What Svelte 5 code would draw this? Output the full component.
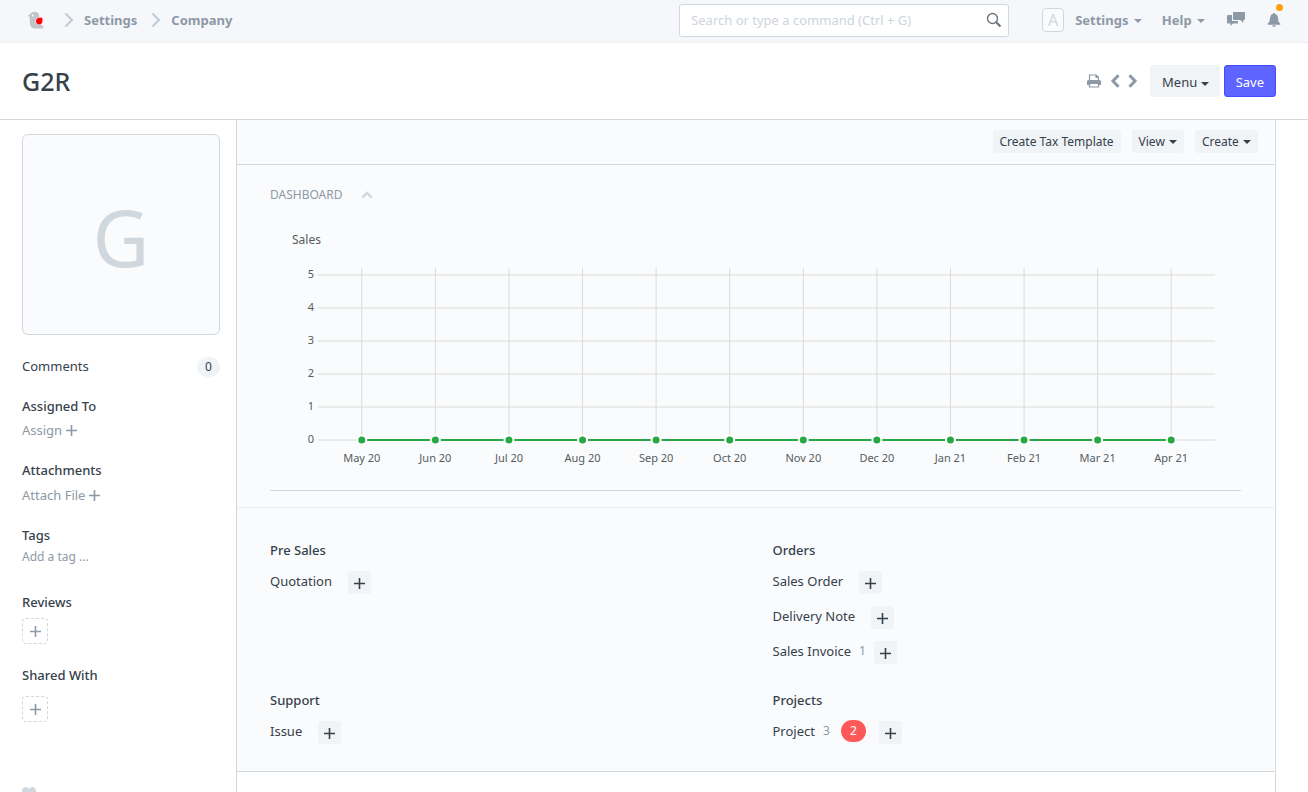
<script>
  const months = ['May 20', 'Jun 20', 'Jul 20', 'Aug 20', 'Sep 20', 'Oct 20', 'Nov 20', 'Dec 20', 'Jan 21', 'Feb 21', 'Mar 21', 'Apr 21'];
  const ticks = [5, 4, 3, 2, 1, 0];
  const groups = [
    { title: 'Pre Sales', links: [{ name: 'Quotation' }] },
    { title: 'Orders', links: [{ name: 'Sales Order' }, { name: 'Delivery Note' }, { name: 'Sales Invoice', count: 1 }] },
    { title: 'Support', links: [{ name: 'Issue' }] },
    { title: 'Projects', links: [{ name: 'Project', count: 3, open: 2 }] }
  ];

  let chartWidth = $state(971);
  const step = $derived((chartWidth - 88) / months.length);
  const xs = $derived(months.map((_, i) => 55 + step * (i + 0.5)));
</script>

{#snippet plus(size)}
  <svg class="icon" width={size} height={size} viewBox="0 0 11 11" aria-hidden="true">
    <path d="M5.500 0v11M0 5.500h11" stroke="currentColor" stroke-width="1.600" />
  </svg>
{/snippet}

<div class="page">
  <nav class="navbar">
    <a class="brand" href="#home" aria-label="Home">
      <svg width="18" height="18" viewBox="0 0 18 18">
        <path d="M.8 4.600 3 3.600C3.600 1.700 5.300.8 7.300.8c3 0 5 1.900 5 4.500 0 .5 0 .9-.2 1.300h-.6C9.500 7.300 8.500 8.600 8.500 10.200c0 2.100 1.500 3.600 3.500 3.600.8 0 1.400-.1 2-.4.800.7 1.400 1.200 2.300 1.700v2.500H8.600C5 17.600 2.800 15 2.800 11.700V6.200z" fill="#c2c5c7" />
        <circle cx="5.800" cy="4.500" r=".9" fill="#fff" />
        <path d="M9 10.200c0-2 1.400-3.400 3.400-3.400h3v3.500c0 1.900-1.200 3.200-3.200 3.200-1.900 0-3.200-1.400-3.200-3.300z" fill="#f00" />
      </svg>
    </a>
    <svg class="crumb" width="10" height="16" viewBox="0 0 10 16" aria-hidden="true"><path d="M1.500 1.500 8 8l-6.500 6.500" fill="none" stroke="#c0cad4" stroke-width="2" /></svg>
    <a class="nav-link" href="#settings">Settings</a>
    <svg class="crumb" width="10" height="16" viewBox="0 0 10 16" aria-hidden="true"><path d="M1.500 1.500 8 8l-6.500 6.500" fill="none" stroke="#c0cad4" stroke-width="2" /></svg>
    <a class="nav-link" href="#company">Company</a>
    <div class="search">
      <input type="text" aria-label="Search" placeholder="Search or type a command (Ctrl + G)" />
      <svg width="16" height="16" viewBox="0 0 16 16" aria-hidden="true">
        <circle cx="6.500" cy="6.500" r="5" fill="none" stroke="#6c7680" stroke-width="1.400" />
        <path d="m10.200 10.200 4.300 4.300" stroke="#6c7680" stroke-width="2.200" />
      </svg>
    </div>
    <span class="user">A</span>
    <button class="nav-link menu-settings">Settings <i class="caret"></i></button>
    <button class="nav-link menu-help">Help <i class="caret"></i></button>
    <button class="chat" aria-label="Chat">
      <svg width="18" height="15" viewBox="0 0 18 15">
        <path d="M1 3h4v6h6v2.500H6L3.500 14v-2.500H1a1 1 0 0 1-1-1V4a1 1 0 0 1 1-1z" fill="#8d99a6" />
        <path d="M7 0h10a1 1 0 0 1 1 1v6a1 1 0 0 1-1 1h-.8v3l-3-3H7a1 1 0 0 1-1-1V1a1 1 0 0 1 1-1z" fill="#8d99a6" />
      </svg>
    </button>
    <button class="bell" aria-label="Notifications">
      <svg width="14" height="14" viewBox="0 0 14 14">
        <path d="M7 0c.7 0 1.100.4 1.200 1.100C10 1.600 10.800 3 11 5c.2 3 .7 4.400 2.300 5.600v1.200H.7v-1.200C2.300 9.400 2.800 8 3 5c.2-2 1-3.400 2.800-3.900C5.900.4 6.300 0 7 0zM5.200 12.300h3.600A1.800 1.500 0 0 1 5.200 12.300z" fill="#8d99a6" />
      </svg>
      <span class="dot"></span>
    </button>
  </nav>

  <header class="head">
    <h1>G2R</h1>
    <div class="actions">
      <button class="plain" aria-label="Print">
        <svg width="16" height="14" viewBox="0 0 16 14">
          <path d="M3.500 7V1h6.700l2.300 2.300V7M10 1v2.500h2.500" fill="none" stroke="#8d99a6" stroke-width="1.200" />
          <path d="M2.500 6h11A1.500 1.500 0 0 1 15 7.500V11h-2V9H3v2H1V7.500A1.500 1.500 0 0 1 2.500 6z" fill="#8d99a6" />
          <path d="M3.500 9.500h9v3.500h-9z" fill="#fff" stroke="#8d99a6" stroke-width="1.200" />
        </svg>
      </button>
      <button class="plain" aria-label="Previous">
        <svg width="10" height="14" viewBox="0 0 10 14"><path d="M8.500 1.300 3 7l5.500 5.700" fill="none" stroke="#8d99a6" stroke-width="3" /></svg>
      </button>
      <button class="plain" aria-label="Next">
        <svg width="10" height="14" viewBox="0 0 10 14"><path d="M1.500 1.300 7 7l-5.500 5.700" fill="none" stroke="#8d99a6" stroke-width="3" /></svg>
      </button>
      <button class="btn menu">Menu <i class="caret"></i></button>
      <button class="btn primary">Save</button>
    </div>
  </header>

  <div class="body">
    <aside>
      <div class="avatar">G</div>
      <div class="comments"><a href="#comments">Comments</a><span class="badge">0</span></div>
      <section class="assigned">
        <h2>Assigned To</h2>
        <button class="add">Assign {@render plus(11)}</button>
      </section>
      <section class="attachments">
        <h2>Attachments</h2>
        <button class="add">Attach File {@render plus(11)}</button>
      </section>
      <section class="tags">
        <h2>Tags</h2>
        <input type="text" aria-label="Add a tag" placeholder="Add a tag ..." />
      </section>
      <section class="reviews">
        <h2>Reviews</h2>
        <button class="dashed" aria-label="Add review">{@render plus(11)}</button>
      </section>
      <section class="shared">
        <h2>Shared With</h2>
        <button class="dashed" aria-label="Share">{@render plus(11)}</button>
      </section>
      <button class="like" aria-label="Like">
        <svg width="14" height="13" viewBox="0 0 14 13"><path d="M7 13 1 6.800C-1.200 4 .5 0 3.600 0 5.300 0 6.400 1 7 2c.6-1 1.700-2 3.400-2 3.100 0 4.800 4 2.600 6.800z" fill="#d1d8dd" /></svg>
      </button>
    </aside>

    <main>
      <div class="toolbar">
        <button class="btn small">Create Tax Template</button>
        <button class="btn small">View <i class="caret"></i></button>
        <button class="btn small">Create <i class="caret"></i></button>
      </div>

      <section class="dashboard">
        <button class="section-title">DASHBOARD
          <svg width="12" height="8" viewBox="0 0 12 8" aria-hidden="true"><path d="m1.300 6.700 4.700-4.700 4.700 4.700" fill="none" stroke="#d1d8dd" stroke-width="2.400" /></svg>
        </button>
        <div class="chart" bind:clientWidth={chartWidth}>
          <svg width={chartWidth} height="270" role="img" aria-label="Sales">
            <text class="title" x="22" y="24">Sales</text>
            {#each ticks as t, i}
              <line x1="48" x2={chartWidth - 26} y1={55 + i * 33} y2={55 + i * 33} stroke="#dadada" />
              <text x="44" y={58 + i * 33} text-anchor="end">{t}</text>
            {/each}
            {#each xs as x, i}
              <line x1={x} x2={x} y1="48" y2="226" stroke="#dadada" />
              <text {x} y="242" text-anchor="middle">{months[i]}</text>
            {/each}
            <line x1={xs[0]} x2={xs[xs.length - 1]} y1="220" y2="220" stroke="#28a745" stroke-width="2" />
            {#each xs as x}
              <circle cx={x} cy="220" r="4.500" fill="#28a745" stroke="#fff" stroke-width="2" />
            {/each}
          </svg>
        </div>
      </section>

      <section class="links">
        {#each groups as g}
          <div class="group">
            <h2>{g.title}</h2>
            {#each g.links as l}
              <div class="link">
                <a href="#{l.name}">{l.name}</a>
                {#if l.count}<span class="count">{l.count}</span>{/if}
                {#if l.open}<span class="open">{l.open}</span>{/if}
                <button class="new" class:tight={l.count && !l.open} aria-label="New {l.name}">{@render plus(11)}</button>
              </div>
            {/each}
          </div>
        {/each}
      </section>
    </main>
  </div>
</div>

<style>
  :global(body) { margin: 0; background: #fff; }
  .page {
    height: 100vh;
    overflow: hidden;
    display: flex;
    flex-direction: column;
    font: 13px/18px "Noto Sans", "Open Sans", sans-serif;
    color: #36414c;
  }
  .page * { box-sizing: border-box; }
  button, input { font: inherit; color: inherit; background: none; border: 0; padding: 0; margin: 0; }
  button { cursor: pointer; }
  a { color: inherit; text-decoration: none; }
  svg { display: block; flex: none; }
  h1, h2 { margin: 0; }
  h2 { font-size: 13px; line-height: 18px; font-weight: 500; }
  .caret {
    display: inline-block;
    border: 4px solid transparent;
    border-top-color: currentColor;
    border-bottom: 0;
    vertical-align: middle;
  }

  .navbar {
    flex: none;
    display: flex;
    align-items: center;
    height: 43px;
    padding: 0 27px;
    padding-bottom: 2px;
    background: #f5f7fa;
    border-bottom: 1px solid #ebeff2;
    color: #8d99a6;
  }
  .brand { margin-right: 19px; }
  .crumb { margin-right: 10px; }
  .nav-link { font-weight: 700; white-space: nowrap; }
  .nav-link + .crumb { margin-left: 14px; }
  .search {
    display: flex;
    align-items: center;
    width: 330px;
    height: 33px;
    margin-left: auto;
    margin-right: 33px;
    padding: 0 6px 0 11px;
    background: #fff;
    border: 1px solid #d1d8dd;
    border-radius: 3px;
  }
  .search input { flex: 1; min-width: 0; outline: 0; }
  input::placeholder { color: #ced5db; opacity: 1; }
  .user {
    width: 22px;
    height: 24px;
    border: 1px solid #d1d8dd;
    border-radius: 4px;
    background: #fafbfc;
    color: #d1d8dd;
    text-align: center;
    font-size: 16px;
    line-height: 22px;
    margin-right: 11px;
  }
  .nav-link .caret { margin-left: 2px; }
  .menu-settings { margin-right: 20px; }
  .menu-help { margin-right: 22px; }
  .chat { margin-right: 22px; margin-bottom: 2px; }
  .bell { position: relative; }
  .dot { position: absolute; top: -9px; right: -2px; width: 7px; height: 7px; border-radius: 50%; background: #ffa00a; }

  .head {
    flex: none;
    display: flex;
    align-items: center;
    justify-content: space-between;
    height: 77px;
    padding: 0 32px 0 22px;
    border-bottom: 1px solid #d1d8dd;
  }
  h1 { font-size: 25px; line-height: 32px; font-weight: 500; }
  .actions { display: flex; align-items: center; }
  .plain { margin-right: 8px; }
  .btn { background: #f0f4f7; border-radius: 4px; white-space: nowrap; }
  .menu { height: 32px; padding: 2px 11px 0 12px; margin-left: 4px; margin-right: 4px; }
  .primary { height: 32px; padding: 2px 11px 0; background: #5e64ff; border: 1px solid #444bff; border-radius: 3px; color: #fff; }

  .body { flex: 1; display: flex; min-height: 0; padding-right: 32px; }
  aside { flex: none; width: 236px; padding: 14px 16px 0 22px; }
  .avatar {
    height: 201px;
    border: 1px solid #d1d8dd;
    border-radius: 6px;
    background: #fafbfc;
    color: #d1d8dd;
    font-size: 78px;
    line-height: 204px;
    text-align: center;
  }
  .comments { display: flex; justify-content: space-between; align-items: flex-start; margin-top: 22px; }
  .badge { width: 23px; height: 20px; border-radius: 10px; background: #f0f4f7; text-align: center; line-height: 20px; font-size: 12px; }
  aside section { margin-top: 20px; }
  .assigned { height: 44px; }
  .attachments { height: 45px; }
  .add { display: flex; align-items: center; gap: 4px; margin-top: 6px; color: #8d99a6; }
  .attachments .add { margin-top: 7px; }
  .tags { height: 47px; }
  .tags input { display: block; width: 100%; font-size: 12px; margin-top: 4px; }
  .tags input::placeholder { color: #8d99a6; }
  .dashed {
    display: grid;
    place-items: center;
    width: 26px;
    height: 26px;
    margin-top: 7px;
    border: 1px dashed #d1d8dd;
    border-radius: 4px;
    color: #8d99a6;
  }
  .shared .dashed { margin-top: 12px; }
  aside .shared { margin-top: 22px; }
  .like { margin-top: 65px; }

  main { flex: 1; min-width: 0; border: solid #d1d8dd; border-width: 0 1px; padding-right: 1px; }
  .toolbar {
    display: flex;
    justify-content: flex-end;
    gap: 11px;
    height: 45px;
    padding: 10px 16px 0 0;
    background: #fafbfc;
    border-bottom: 1px solid #d1d8dd;
  }
  .small { height: 23px; padding: 0 7px; border-radius: 3px; font-size: 12px; }
  .small .caret { margin-left: 1px; }
  .dashboard { padding: 21px 33px 16px; background: #fafbfc; border-bottom: 1px solid #ebeff2; }
  .section-title { display: flex; align-items: center; gap: 18px; font-size: 12px; color: #8d99a6; }
  .chart { margin-top: 16px; border-bottom: 1px solid #d1d8dd; }
  .chart text { font-size: 11px; fill: #555b61; }
  .chart .title { font-size: 12px; }

  .links {
    display: grid;
    grid-template-columns: 1fr 1fr;
    row-gap: 26px;
    padding: 33px 33px 26px;
    background: #fafbfc;
    border-bottom: 1px solid #d1d8dd;
  }
  .links .group:nth-child(even) { padding-left: 17px; }
  .group h2 { margin-bottom: 11px; }
  .link { display: flex; align-items: flex-start; height: 35px; }
  .link:last-child { height: 25px; }
  .link a { line-height: 22px; }
  .count { margin-left: 8px; color: #8d99a6; font-size: 12px; line-height: 22px; }
  .open { width: 25px; height: 22px; margin-left: 11px; border-radius: 11px; background: #ff5858; color: #fff; font-size: 12px; line-height: 22px; text-align: center; }
  .new { display: grid; place-items: center; width: 23px; height: 23px; padding-top: 2px; margin-left: 16px; margin-top: 1px; border-radius: 3px; background: #f0f4f7; }
  .open + .new { margin-left: 13px; }
  .new.tight { margin-left: 8px; }
</style>
